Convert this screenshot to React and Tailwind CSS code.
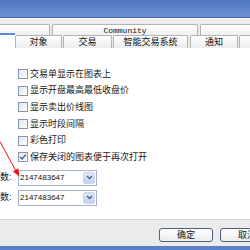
import React from 'react';

const cjk = { fontFamily: '"Liberation Sans", "Noto Sans CJK SC", sans-serif' };

const options = [
  { label: '交易单显示在图表上', checked: false },
  { label: '显示开盘最高最低收盘价', checked: false },
  { label: '显示卖出价线图', checked: false },
  { label: '显示时段间隔', checked: false },
  { label: '彩色打印', checked: false },
  { label: '保存关闭的图表便于再次打开', checked: true },
];

const Checkbox = ({ checked }) => (
  <div className="w-[10px] h-[10px] shrink-0 border border-[#8596b3] bg-gradient-to-br from-[#e2e6ee] to-white flex items-center justify-center">
    {checked && (
      <svg width="8" height="8" viewBox="0 0 8 8">
        <polyline points="1.2,4 3.2,6 6.8,1.6" fill="none" stroke="#3f5f92" strokeWidth="1.4" />
      </svg>
    )}
  </div>
);

const Combo = () => (
  <div className="w-[79px] h-[16px] border border-[#a5b4cc] bg-white flex items-center justify-between pl-[1px] pr-[1px]">
    <span className="text-[8px] text-[#111] leading-none" style={{ fontFamily: '"Liberation Sans", sans-serif' }}>2147483647</span>
    <div className="w-[12px] h-[12px] rounded-[2px] bg-gradient-to-b from-[#dfe7f8] to-[#c2d1ef] border border-[#c9d4ea] flex items-center justify-center">
      <svg width="7" height="5" viewBox="0 0 7 5">
        <polyline points="1,1 3.5,3.5 6,1" fill="none" stroke="#4d5f85" strokeWidth="1.3" />
      </svg>
    </div>
  </div>
);

const TopTab = ({ className, children }) => (
  <div className={`h-[13px] shrink-0 border border-b-0 border-[#b3b3b3] rounded-t-[2px] bg-gradient-to-b from-white to-[#ededed] flex items-center justify-center ${className}`}>
    {children}
  </div>
);

const Tab = ({ className, children }) => (
  <div className={`h-[13px] shrink-0 border border-b-0 border-[#b3b3b3] rounded-t-[2px] bg-gradient-to-b from-white to-[#ececec] flex items-center justify-center text-[9px] text-[#111] leading-none whitespace-nowrap overflow-hidden ${className}`}>
    {children}
  </div>
);

export default function App() {
  return (
    <div className="relative w-[250px] h-[250px] overflow-hidden bg-[#ebebeb] flex flex-col" style={cjk}>
      {/* title bar */}
      <div className="h-[18px] shrink-0 bg-gradient-to-b from-[#5077c4] to-[#6d90d3] border-b border-[#3e62aa]" />
      <div className="h-[6px] shrink-0 border-t border-white" />

      {/* tab row 1 */}
      <div className="flex gap-[2px] -ml-[4px] shrink-0">
        <TopTab className="w-[54px]" />
        <TopTab className="w-[146px]">
          <span className="text-[8px] leading-none text-[#111]" style={{ fontFamily: '"Liberation Mono", monospace' }}>Community</span>
        </TopTab>
        <TopTab className="w-[60px]" />
      </div>

      {/* tab row 2 */}
      <div className="flex items-end -mt-px shrink-0 h-[12px] relative">
        <div className="w-[15px] h-[15px] -mt-[3px] shrink-0 bg-white border-t-2 border-[#5b8ad9] self-end" />
        <Tab className="w-[47px]">对象</Tab>
        <Tab className="w-[49px] ml-px">交易</Tab>
        <Tab className="w-[75px] ml-px">智能交易系统</Tab>
        <Tab className="w-[48px] ml-[2px]">通知</Tab>
        <Tab className="w-[30px] ml-px justify-start pl-[10px]">电子邮件</Tab>
      </div>

      {/* content panel */}
      <div className="h-[172px] shrink-0 bg-white border-b border-[#d4d4d4] pt-[18px]">
        <div className="flex flex-col pl-[18px]">
          {options.map((o) => (
            <div key={o.label} className="h-[16.6px] flex items-center gap-[2px]">
              <Checkbox checked={o.checked} />
              <span className="text-[9px] leading-none text-[#151515] whitespace-nowrap">{o.label}</span>
            </div>
          ))}
        </div>
        <div className="flex flex-col gap-[4px] mt-[4px]">
          {[0, 1].map((i) => (
            <div key={i} className="flex items-center">
              <div className="w-[18px] text-[9px] leading-none text-[#151515] whitespace-nowrap">数:</div>
              <Combo />
            </div>
          ))}
        </div>
      </div>

      {/* buttons */}
      <div className="h-[26px] shrink-0 flex items-start pt-[8px] pl-[159px] gap-[7px]">
        <div className="w-[54px] h-[14px] shrink-0 rounded-[3px] border border-[#50607a] bg-gradient-to-b from-white to-[#ececec] flex items-center justify-center text-[9px] leading-none text-[#111]">确定</div>
        <div className="w-[54px] h-[14px] shrink-0 rounded-[3px] border border-[#50607a] bg-gradient-to-b from-white to-[#ececec] flex items-center justify-center text-[9px] leading-none text-[#111]">取消</div>
      </div>
      <div className="flex-1 bg-[#5b80c8]" />

      {/* red annotation arrow */}
      <svg className="absolute left-0 top-0 pointer-events-none" width="250" height="250" viewBox="0 0 250 250">
        <line x1="-1" y1="140" x2="16" y2="171" stroke="#f01010" strokeWidth="1" />
        <polygon points="19.5,176.5 13,171.4 18.2,168.2" fill="#f01010" />
      </svg>
    </div>
  );
}
